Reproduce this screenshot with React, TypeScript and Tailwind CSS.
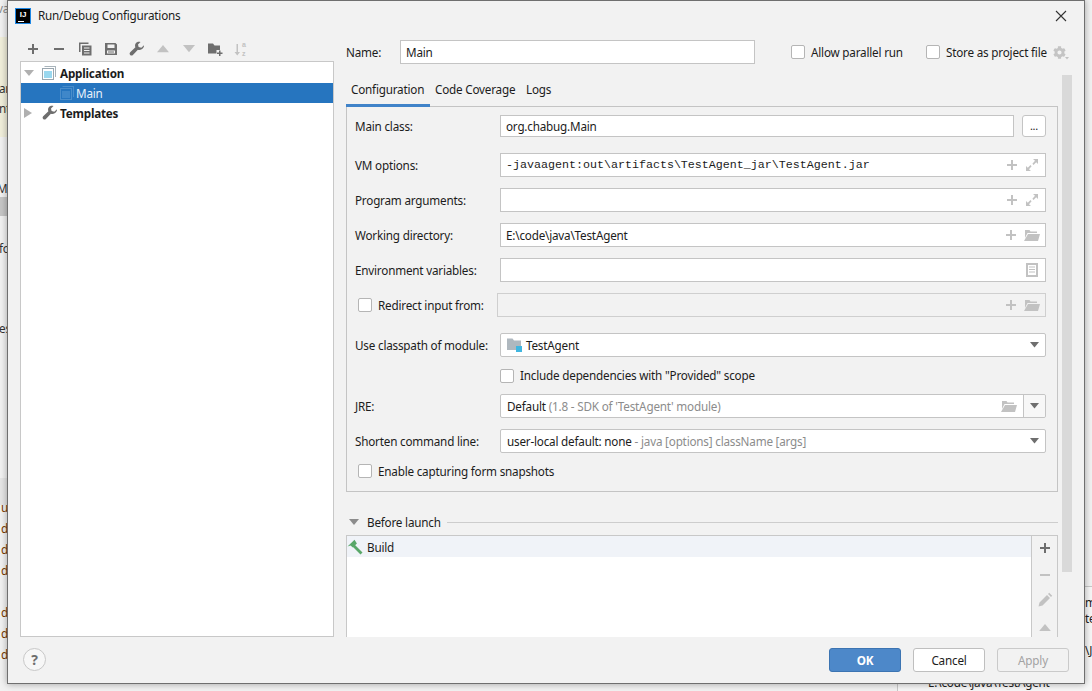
import type { ReactNode } from 'react';
import { FaCog } from 'react-icons/fa';

const GRAY = '#6e6e6e';
const LIGHT = '#c2c2c2';

const Plus = ({ color = GRAY }: { color?: string }) => (
  <svg width="16" height="16" viewBox="0 0 16 16"><path d="M3 7h4V3h2v4h4v2H9v4H7V9H3z" fill={color} /></svg>
);
const Minus = ({ color = GRAY }: { color?: string }) => (
  <svg width="16" height="16" viewBox="0 0 16 16"><rect x="3" y="7" width="10" height="2" fill={color} /></svg>
);
const Copy = () => (
  <svg width="16" height="16" viewBox="0 0 16 16"><path d="M2 1.500h9.500v1.500H3.500V11H2z" fill={GRAY} /><path fillRule="evenodd" d="M5 4.500h9.500v10H5zM7 6.500v1h5.500v-1zm0 2.500v1h5.500V9zm0 2.500v1h5.500v-1z" fill={GRAY} /></svg>
);
const Save = () => (
  <svg width="16" height="16" viewBox="0 0 16 16"><path fillRule="evenodd" d="M2 2h10.500L14 3.500V14H2zM4.500 3.500V7h7V3.500zM4 9.500V12.500h8v-3z" fill={GRAY} /><rect x="5" y="10.500" width="6" height="1" fill={GRAY} /></svg>
);
const Wrench = () => (
  <svg width="16" height="16" viewBox="0 0 16 16"><path d="M15 4.300 12.300 6.800 9.600 5.900 9 3.400 11.500 1C9.600.4 7.500 1 6.500 2.700c-.6 1.100-.6 2.400-.1 3.500L1.200 11.300c-.8.800-.8 2 0 2.700.8.800 1.900.7 2.700 0l5-5.300c1.200.5 2.600.3 3.800-.4 1.500-1 2.500-2.400 2.300-4z" fill={GRAY} /></svg>
);
const Triangle = ({ up, color, size = 12 }: { up?: boolean; color: string; size?: number }) => (
  <svg width={size} height={size * 0.6} viewBox="0 0 10 6"><path d={up ? 'M5 0l5 6H0z' : 'M0 0h10L5 6z'} fill={color} /></svg>
);
const FolderPlus = () => (
  <svg width="16" height="16" viewBox="0 0 16 16"><path d="M1 2.500h5l1.500 2H13V9H9.500v3.500H1z" fill={GRAY} /><path d="M12 9.500h1.500V11.500H15.500V13H13.500V15H12V13H10V11.500H12z" fill={GRAY} /></svg>
);
const SortAz = () => (
  <svg width="16" height="16" viewBox="0 0 16 16">
    <path d="M3.500 3h1.500v8H7L4.250 14.500 1.500 11h2z" fill={LIGHT} />
    <text x="9" y="6" fontSize="7" fontWeight="700" fill={LIGHT} fontFamily="Liberation Sans">a</text>
    <text x="9" y="14.500" fontSize="7" fontWeight="700" fill={LIGHT} fontFamily="Liberation Sans">z</text>
  </svg>
);
const ConfigIcon = ({ selected }: { selected?: boolean }) => (
  <svg width="14" height="14" viewBox="0 0 14 14">
    <path d="M2.500 0H14v11h-1V1H2.500z" fill={selected ? '#4a8dca' : '#a9b4bb'} />
    <rect x=".5" y="2.500" width="11" height="11" fill="none" stroke={selected ? '#4a8dca' : '#9aa7b0'} />
    <rect x="2" y="5" width="8" height="7" fill={selected ? '#3f87c9' : '#9ad8ef'} />
  </svg>
);
const Expand = () => (
  <svg width="14" height="14" viewBox="0 0 14 14"><path d="M8 1h5v5l-1.800-1.800L8.500 7 7.400 5.800 10 2.800zM1 8l1.800 1.700L5.500 7l1.100 1.200L4 11.200 6 13H1z" fill={LIGHT} /></svg>
);
const FolderOpen = () => (
  <svg width="16" height="12" viewBox="0 0 16 12"><path d="M1 1h4.500l1 1.500H13V4H3.500L1 9z" fill={LIGHT} /><path d="M4 5h12l-2 7H0z" fill={LIGHT} /></svg>
);
const DocIcon = () => (
  <svg width="12" height="14" viewBox="0 0 12 14"><path fillRule="evenodd" d="M0 0h12v14H0zM2 2v10h8V2z" fill={LIGHT} /><path d="M3 3.500h6v1H3zM3 6h6v1H3zM3 8.500h6v1H3z" fill={LIGHT} /></svg>
);
const ModuleFolder = () => (
  <svg width="15" height="14" viewBox="0 0 15 14"><path d="M0 .500h5.500l1.500 2h7V8H9v4H0z" fill="#afb8bf" /><rect x="9" y="8" width="6" height="6" fill="#40b6e0" /></svg>
);
const Hammer = () => (
  <svg width="16" height="16" viewBox="0 0 16 16"><path d="M6.500 6.500l8 8" stroke="#59a869" strokeWidth="2.800" /><path d="M.500 7.500 7.500.800l2.400 3.800-4 3.900L3.500 6.400z" fill="#59a869" /></svg>
);
const Pencil = () => (
  <svg width="16" height="16" viewBox="0 0 16 16"><path d="M1.500 14.500 2.500 10.500 10 3l3 3-7.500 7.500zM11 2l1.200-1.200 3 3L14 5z" fill={LIGHT} /></svg>
);

const Checkbox = () => <span className="block w-[14px] h-[14px] shrink-0 rounded-[2px] border border-[#b5b5b5] bg-white" />;

const Field = ({ children, right, disabled, mono }: { children?: ReactNode; right?: ReactNode; disabled?: boolean; mono?: boolean }) => (
  <div className={`flex flex-1 h-full items-center border-[1px] pl-[5px] pr-[5px] ${disabled ? 'bg-[#f2f2f2] border-[#cfcfcf]' : 'bg-white border-[#c4c4c4]'} ${mono ? "font-['Liberation_Mono',monospace] text-[11.67px] tracking-normal" : ''}`}>
    <span className="flex-1 whitespace-nowrap">{children}</span>
    <span className="flex items-center gap-[5px]">{right}</span>
  </div>
);

const Combo = ({ children, right }: { children: ReactNode; right?: ReactNode }) => (
  <div className="flex flex-1 h-full items-center rounded-[2px] border-[1px] border-[#c4c4c4] bg-white pl-[6px]">
    <span className="flex flex-1 items-center whitespace-nowrap">{children}</span>
    {right ?? <span className="flex w-[22px] justify-center"><Triangle color={GRAY} size={9} /></span>}
  </div>
);

const Row = ({ label, className, children }: { label: string; className: string; children: ReactNode }) => (
  <div className={`flex items-center ${className}`}>
    <span className="w-[145px] shrink-0">{label}</span>
    {children}
  </div>
);

const PlusExpand = () => (
  <>
    <Plus color={LIGHT} />
    <span className="flex mr-[1px]"><Expand /></span>
  </>
);
const PlusFolder = () => (
  <>
    <Plus color={LIGHT} />
    <FolderOpen />
  </>
);

const toolbar = [
  <Plus key="add" />, <Minus key="remove" />, <Copy key="copy" />, <Save key="save" />, <Wrench key="wrench" />,
  <Triangle key="up" up color={LIGHT} />, <Triangle key="down" color={LIGHT} />, <FolderPlus key="folder" />, <SortAz key="sort" />,
];

// what shows of the windows behind the dialog
const behind: { text: string; cls: string }[] = [
  { text: 'va', cls: 'left-[-3px] top-[0px] text-[#8a8a8a]' },
  { text: 'ar', cls: 'left-[-1px] top-[80px] text-[#333]' },
  { text: 'nt', cls: 'left-[-1px] top-[100px] text-[#333]' },
  { text: 'MI', cls: 'left-[-3px] top-[180px] text-[#333]' },
  { text: 'fo', cls: 'left-[-1px] top-[240px] text-[#333]' },
  { text: 'es', cls: 'left-[-1px] top-[320px] text-[#333]' },
  { text: 'u', cls: 'left-[1px] top-[499px] text-[#7a3b00]' },
  { text: 'd', cls: 'left-[1px] top-[520px] text-[#7a3b00]' },
  { text: 'd', cls: 'left-[1px] top-[541px] text-[#7a3b00]' },
  { text: 'd', cls: 'left-[1px] top-[562px] text-[#7a3b00]' },
  { text: 'd', cls: 'left-[1px] top-[604px] text-[#7a3b00]' },
  { text: 'd', cls: 'left-[1px] top-[625px] text-[#7a3b00]' },
  { text: 'd', cls: 'left-[1px] top-[646px] text-[#7a3b00]' },
  { text: 'm', cls: 'left-[1085px] top-[594px] text-[#222]' },
  { text: 'te', cls: 'left-[1085px] top-[610px] text-[#222]' },
  { text: '\\J', cls: 'left-[1085px] top-[642px] text-[#222]' },
  { text: 'E:\\code\\java\\TestAgent', cls: 'left-[928px] top-[674px] text-[#222]' },
];

export default function App() {
  return (
    <div className="relative w-[1092px] h-[691px] overflow-hidden bg-[#f2f2f2] font-['Noto_Sans',sans-serif] text-[11.7px] leading-[16px] text-[#1c1c1c] tracking-[-0.2px]">
      {/* background windows */}
      <div className="absolute left-0 top-[37px] w-[8px] h-[100px] bg-[#f1efdb]" />
      <div className="absolute left-0 top-[197px] w-[8px] h-[19px] bg-[#c6c6c6]" />
      <div className="absolute left-0 top-[478px] w-[8px] h-[27px] bg-[#e6e6e6]" />
      <div className="absolute left-[1084px] top-[586px] w-[8px] h-[105px] bg-[#f7f7f7] border-t border-[#c8c8c8]" />
      <div className="absolute left-[897px] top-[683px] w-[195px] h-[8px] bg-[#f7f7f7] border-l border-[#c8c8c8]" />
      {behind.map((b, i) => (
        <span key={i} className={`absolute whitespace-nowrap ${b.cls}`}>{b.text}</span>
      ))}

      {/* dialog */}
      <div className="absolute left-[7px] top-0 w-[1078px] h-[684px] flex flex-col border border-[#6f6f6f] bg-[#f2f2f2] shadow-[0_0_7px_rgba(0,0,0,0.35)]">
        {/* title bar */}
        <div className="flex items-center h-[30px] shrink-0 pl-[7px] pr-[17px]">
          <div className="w-[16px] h-[16px] border border-[#1e88e5] bg-black text-white flex flex-col items-center font-['Liberation_Sans',sans-serif] text-[8px] font-bold leading-[9px] tracking-normal pt-[1px]">
            IJ
            <span className="block w-[6px] h-[1px] bg-white self-start ml-[2px] mt-[2px]" />
          </div>
          <span className="ml-[7px] flex-1 pb-[2px]">Run/Debug Configurations</span>
          <svg width="12" height="12" viewBox="0 0 12 12"><path d="M1 1l10 10M11 1 1 11" stroke="#333" strokeWidth="1.100" /></svg>
        </div>

        <div className="flex h-[606px] shrink-0 overflow-hidden">
          {/* left column */}
          <div className="flex flex-col w-[326px] shrink-0 pl-[12px]">
            <div className="flex items-center h-[30px] shrink-0 pt-[6px]">
              {toolbar.map((icon, i) => (
                <span key={i} className="flex w-[26px] justify-center">{icon}</span>
              ))}
            </div>
            <div className="flex-1 border border-[#c8c8c8] bg-white pt-[1px]">
              <div className="flex items-center h-[20px] font-bold">
                <span className="flex w-[21px] justify-start pl-[3px]"><Triangle color="#b0b0b0" size={10} /></span>
                <ConfigIcon />
                <span className="ml-[4px]">Application</span>
              </div>
              <div className="flex items-center h-[20px] pl-[39px] bg-[#2675bf] text-[#e8f1fa]">
                <ConfigIcon selected />
                <span className="ml-[2px]">Main</span>
              </div>
              <div className="flex items-center h-[20px] font-bold">
                <span className="flex w-[21px] justify-start pl-[3px]">
                  <svg width="8" height="10" viewBox="0 0 8 10"><path d="M0 0l8 5-8 5z" fill="#b0b0b0" /></svg>
                </span>
                <Wrench />
                <span className="ml-[2px]">Templates</span>
              </div>
            </div>
          </div>

          {/* right column */}
          <div className="flex ml-[12px] gap-[4px]">
            <div className="flex flex-col w-[712px] shrink-0 pt-[9px]">
              <div className="flex items-center h-[24px] shrink-0">
                <span className="w-[54px] shrink-0">Name:</span>
                <div className="flex items-center w-[355px] shrink-0 h-full border border-[#c4c4c4] bg-white pl-[5px]">Main</div>
                <span className="ml-[36px] shrink-0"><Checkbox /></span>
                <span className="ml-[6px] w-[92px] shrink-0 whitespace-nowrap">Allow parallel run</span>
                <span className="ml-[23px] shrink-0"><Checkbox /></span>
                <span className="ml-[6px] w-[100px] shrink-0 whitespace-nowrap">Store as project file</span>
                <span className="ml-[7px] flex shrink-0 items-end text-[#c4c4c4]">
                  <FaCog size={13} />
                  <span className="ml-[-1px] mb-[-1px]"><Triangle color={LIGHT} size={4} /></span>
                </span>
              </div>

              {/* tabs */}
              <div className="relative z-10 flex h-[43px] shrink-0 items-end">
                <span className="h-full w-[84px] flex items-center px-[5px] pt-[10px] border-b-[3px] border-[#4083c9]">Configuration</span>
                <span className="h-full w-[91px] flex items-center px-[5px] pt-[10px] border-b-[3px] border-transparent">Code Coverage</span>
                <span className="h-full flex items-center px-[5px] pt-[10px] border-b-[3px] border-transparent">Logs</span>
              </div>

              {/* configuration panel */}
              <div className="mt-[-1px] h-[386px] shrink-0 border border-[#c4c4c4] pl-[8px] pr-[11px] pt-[8px]">
                <Row label="Main class:" className="h-[22px] leading-[18px]">
                  <Field>org.chabug.Main</Field>
                  <button className="ml-[8px] w-[24px] h-[22px] rounded-[3px] border border-[#c4c4c4] bg-white text-[11px] leading-[16px]">...</button>
                </Row>
                <Row label="VM options:" className="h-[24px] mt-[16px]">
                  <Field mono right={<PlusExpand />}>-javaagent:out\artifacts\TestAgent_jar\TestAgent.jar</Field>
                </Row>
                <Row label="Program arguments:" className="h-[24px] mt-[11px]">
                  <Field right={<PlusExpand />} />
                </Row>
                <Row label="Working directory:" className="h-[24px] mt-[11px]">
                  <Field right={<PlusFolder />}>E:\code\java\TestAgent</Field>
                </Row>
                <Row label="Environment variables:" className="h-[24px] mt-[11px]">
                  <Field right={<span className="pr-[2px] flex"><DocIcon /></span>} />
                </Row>
                <div className="flex items-center h-[24px] mt-[11px]">
                  <div className="flex items-center w-[142px] shrink-0 pl-[3px] gap-[6px]">
                    <Checkbox />
                    <span>Redirect input from:</span>
                  </div>
                  <Field disabled right={<PlusFolder />} />
                </div>
                <Row label="Use classpath of module:" className="h-[24px] mt-[16px]">
                  <Combo>
                    <ModuleFolder />
                    <span className="ml-[4px]">TestAgent</span>
                  </Combo>
                </Row>
                <div className="flex items-center h-[14px] mt-[12px] pl-[145px] gap-[6px]">
                  <Checkbox />
                  <span className="mt-[-2px]">Include dependencies with "Provided" scope</span>
                </div>
                <Row label="JRE:" className="h-[24px] mt-[11px]">
                  <Combo
                    right={
                      <span className="flex h-[22px] items-center">
                        <span className="pr-[6px]"><FolderOpen /></span>
                        <span className="flex h-full w-[22px] items-center justify-center rounded-r-[2px] border-l border-[#c4c4c4] bg-[#f7f7f7]"><Triangle color={GRAY} size={9} /></span>
                      </span>
                    }
                  >
                    Default<span className="ml-[3px] text-[#8c8c8c]">(1.8 - SDK of 'TestAgent' module)</span>
                  </Combo>
                </Row>
                <Row label="Shorten command line:" className="h-[24px] mt-[11px]">
                  <Combo>
                    user-local default: none<span className="ml-[3px] text-[#8c8c8c]">- java [options] className [args]</span>
                  </Combo>
                </Row>
                <div className="flex items-center h-[14px] mt-[11px] pl-[3px] gap-[6px]">
                  <Checkbox />
                  <span>Enable capturing form snapshots</span>
                </div>
              </div>

              {/* before launch */}
              <div className="flex items-center h-[16px] mt-[22px] shrink-0 pl-[3px]">
                <Triangle color="#8c8c8c" size={10} />
                <span className="ml-[8px]">Before launch</span>
                <span className="ml-[6px] flex-1 h-[1px] bg-[#cdcdcd]" />
              </div>
              <div className="flex flex-1 mt-[5px] border-[1px] border-b-0 border-[#c8c8c8] bg-white">
                <div className="flex-1">
                  <div className="flex items-center h-[21px] bg-[#f0f3f8]">
                    <Hammer />
                    <span className="ml-[4px] pt-[1px]">Build</span>
                  </div>
                </div>
                <div className="flex flex-col items-center w-[26px] border-l border-[#c8c8c8] bg-[#f2f2f2] pt-[4px]">
                  <Plus />
                  <span className="flex mt-[11px]"><Minus color={LIGHT} /></span>
                  <span className="flex mt-[9px]"><Pencil /></span>
                  <span className="flex mt-[16px]"><Triangle up color={LIGHT} /></span>
                </div>
              </div>
            </div>

            {/* scrollbar */}
            <div className="w-[10px] h-[497px] mt-[44px] bg-[#d9d9d9]" />
          </div>
        </div>

        {/* footer */}
        <div className="flex items-start flex-1 pl-[15px] pr-[15px] pt-[11px]">
          <span className="flex items-center justify-center w-[23px] h-[23px] rounded-full border border-[#c8c8c8] bg-[#f7f7f7] text-[14px] font-bold text-[#6e6e6e]">?</span>
          <div className="flex-1" />
          <button className="w-[72px] h-[24px] rounded-[3px] border border-[#3c74b2] bg-[#4d88c9] font-bold text-white">OK</button>
          <button className="ml-[12px] w-[72px] h-[24px] rounded-[3px] border border-[#bfbfbf] bg-white">Cancel</button>
          <button className="ml-[12px] w-[72px] h-[24px] rounded-[3px] border border-[#cacaca] bg-[#f2f2f2] text-[#a3a3a3]">Apply</button>
        </div>
      </div>
    </div>
  );
}
